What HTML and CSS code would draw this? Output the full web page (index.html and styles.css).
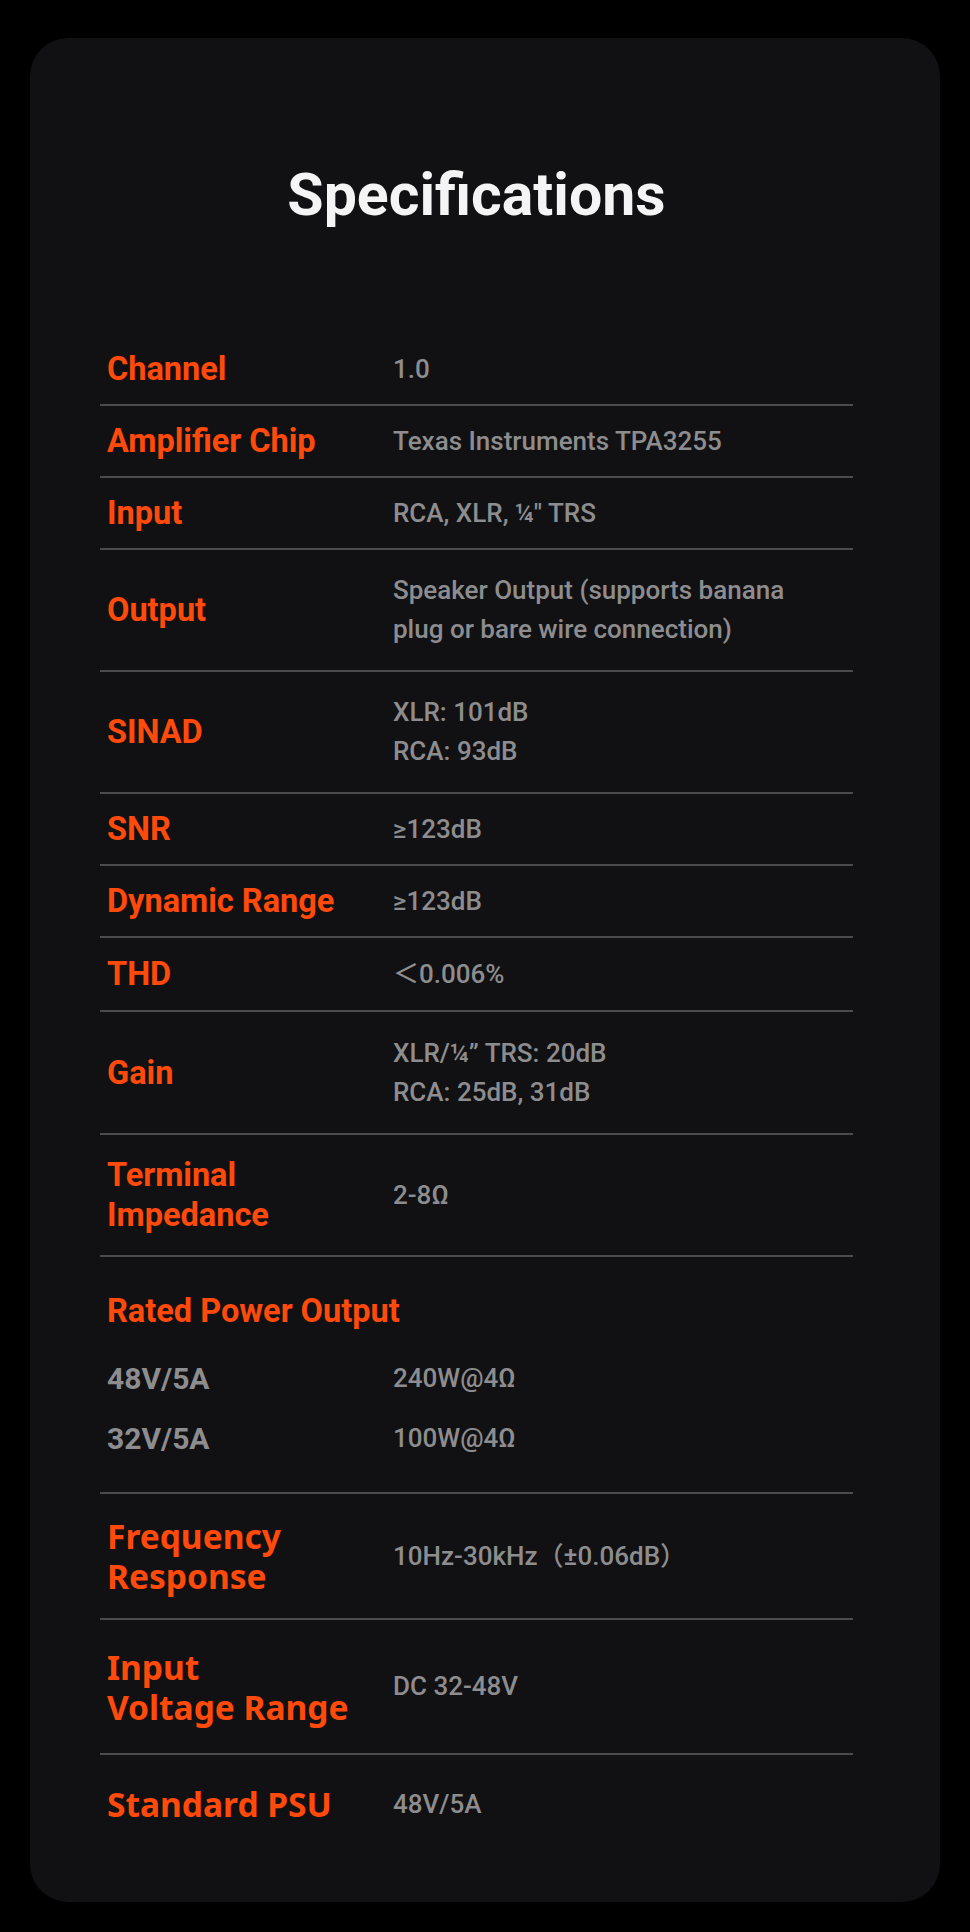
FILE: index.html
```html
<!DOCTYPE html>
<html lang="en">
<head>
  <meta charset="UTF-8">
  <meta name="viewport" content="width=device-width, initial-scale=1.0">
  <title>Specifications</title>
  <link rel="stylesheet" href="styles.css">
</head>
<body>
  <div class="card">
    <h1 class="title">Specifications</h1>
    <div class="specs">
      <div class="row">
        <div class="label">Channel</div>
        <div class="value">1.0</div>
      </div>
      <div class="row">
        <div class="label">Amplifier Chip</div>
        <div class="value">Texas Instruments TPA3255</div>
      </div>
      <div class="row">
        <div class="label">Input</div>
        <div class="value">RCA, XLR, ¼" TRS</div>
      </div>
      <div class="row tall">
        <div class="label">Output</div>
        <div class="value">Speaker Output (supports banana<br>plug or bare wire connection)</div>
      </div>
      <div class="row tall">
        <div class="label">SINAD</div>
        <div class="value">XLR: 101dB<br>RCA: 93dB</div>
      </div>
      <div class="row">
        <div class="label">SNR</div>
        <div class="value">≥123dB</div>
      </div>
      <div class="row">
        <div class="label">Dynamic Range</div>
        <div class="value">≥123dB</div>
      </div>
      <div class="row thd">
        <div class="label">THD</div>
        <div class="value">＜0.006%</div>
      </div>
      <div class="row tall gain">
        <div class="label">Gain</div>
        <div class="value">XLR/¼” TRS: 20dB<br>RCA: 25dB, 31dB</div>
      </div>
      <div class="row tall">
        <div class="label">Terminal<br>Impedance</div>
        <div class="value">2-8Ω</div>
      </div>
      <div class="row rated">
        <div class="label">Rated Power Output</div>
        <div class="power">
          <div class="sub">48V/5A</div>
          <div class="value">240W@4Ω</div>
        </div>
        <div class="power">
          <div class="sub">32V/5A</div>
          <div class="value">100W@4Ω</div>
        </div>
      </div>
      <div class="row freq">
        <div class="label big">Frequency<br>Response</div>
        <div class="value">10Hz-30kHz（±0.06dB）</div>
      </div>
      <div class="row voltage">
        <div class="label big">Input<br>Voltage Range</div>
        <div class="value">DC 32-48V</div>
      </div>
      <div class="row last">
        <div class="label big">Standard PSU</div>
        <div class="value">48V/5A</div>
      </div>
    </div>
  </div>
</body>
</html>
```

FILE: styles.css
```css
body {
  margin: 0;
  padding: 38px 30px 30px;
  background-color: #000;
  font-family: Roboto, "Noto Sans CJK SC", sans-serif;
}

.card {
  height: 1864px;
  box-sizing: border-box;
  padding: 121px 87px 0 70px;
  background-color: #111113;
  border-radius: 38px;
}

.title {
  margin: 0 0 103px;
  text-align: center;
  font-size: 59px;
  line-height: 72px;
  font-weight: 700;
  color: #f4f4f4;
}

.row {
  display: grid;
  grid-template-columns: 293px 1fr;
  align-items: center;
  min-height: 72px;
  box-sizing: border-box;
  border-bottom: 2px solid #4b4b4d;
}

.row.thd {
  min-height: 74px;
}

.row.tall {
  min-height: 122px;
}

.row.gain {
  min-height: 123px;
}

.row.rated {
  display: block;
  min-height: 237px;
  padding-top: 36px;
}

.row.freq {
  min-height: 126px;
}

.row.voltage {
  min-height: 135px;
}

.row.last {
  min-height: 98px;
  border-bottom: none;
}

.label {
  padding-left: 7px;
  font-size: 32.5px;
  line-height: 40px;
  font-weight: 700;
  color: #ff4a0b;
}

.label.big {
  font-family: "Noto Sans", Roboto, sans-serif;
  font-size: 33.5px;
}

.value {
  font-size: 26px;
  line-height: 39px;
  font-weight: 500;
  color: #8d8d8f;
}

.power {
  display: grid;
  grid-template-columns: 293px 1fr;
  align-items: center;
  height: 60px;
}

.rated .label {
  margin-bottom: 19px;
  line-height: 36px;
}

.sub {
  padding-left: 7px;
  font-size: 30px;
  font-weight: 700;
  color: #8d8d8f;
}
```
